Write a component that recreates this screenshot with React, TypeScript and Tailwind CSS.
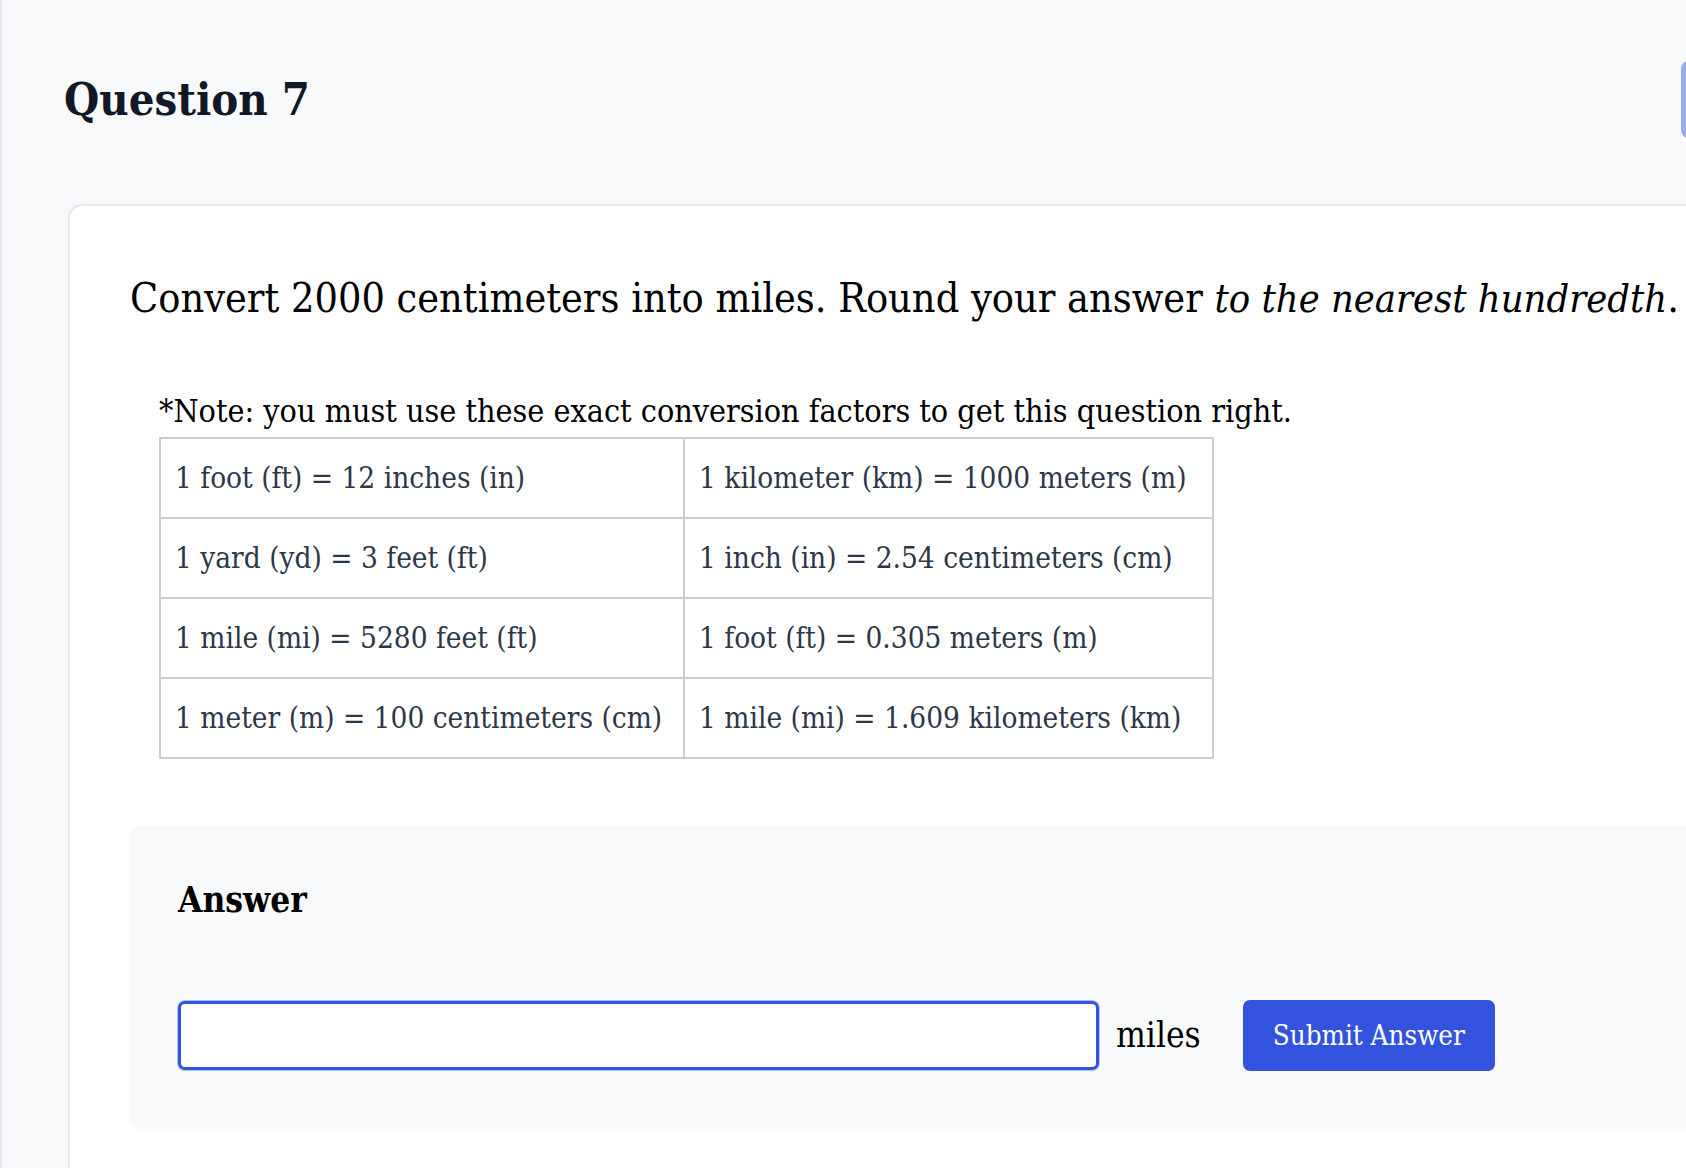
import React from "react";

const rows: [string, string][] = [
  ["1 foot (ft) = 12 inches (in)", "1 kilometer (km) = 1000 meters (m)"],
  ["1 yard (yd) = 3 feet (ft)", "1 inch (in) = 2.54 centimeters (cm)"],
  ["1 mile (mi) = 5280 feet (ft)", "1 foot (ft) = 0.305 meters (m)"],
  ["1 meter (m) = 100 centimeters (cm)", "1 mile (mi) = 1.609 kilometers (km)"],
];

export default function App() {
  return (
    <div
      className="h-[1168px] w-full overflow-hidden bg-[#f8f9fb] border-l-2 border-[#e6e8ec]"
      style={{ fontFamily: '"DejaVu Serif Condensed", "DejaVu Serif", "Liberation Serif", serif', fontStretch: "condensed" }}
    >
      <div className="w-[2000px] pl-[64px]">
        <div className="flex items-center pt-[61px]">
          <h1 className="-ml-[2px] w-[1617px] shrink-0 text-[45px] leading-[77px] font-bold text-[#111827]">
            Question 7
          </h1>
          <div className="h-[77px] w-[160px] shrink-0 rounded-l-lg bg-[#9ca8ef]" />
        </div>

        <div className="mt-[66px] ml-[2px] rounded-tl-[14px] border-l-2 border-t-2 border-[#e6e8ec] bg-white pl-[60px] pt-[68px] pb-[200px]">
          <p className="whitespace-nowrap text-[41px] leading-[49px] text-black">
            Convert 2000 centimeters into miles. Round your answer{" "}
            <em className="text-[39.5px]">to the nearest hundredth</em>.
          </p>

          <div className="ml-[29px] mt-[70px]">
            <p className="text-[32px] leading-[36px] text-black">
              *Note: you must use these exact conversion factors to get this question right.
            </p>
            <table className="mt-[8px] border-collapse border-2 border-[#cdcdcd] text-[29.5px] text-[#2d3748]">
              <tbody>
                {rows.map((r, i) => (
                  <tr key={i} className="h-[80px]">
                    <td className="w-[524px] border-2 border-[#cdcdcd] px-[14px] whitespace-nowrap">
                      {r[0]}
                    </td>
                    <td className="w-[529px] border-2 border-[#cdcdcd] px-[14px] whitespace-nowrap">
                      {r[1]}
                    </td>
                  </tr>
                ))}
              </tbody>
            </table>
          </div>

          <div className="mt-[66px] rounded-l-[10px] bg-[#f8f9fb] pl-[48px] pt-[56px] pb-[58px]">
            <div className="text-[35px] leading-[38px] font-bold text-black">Answer</div>
            <div className="mt-[81px] flex items-center">
              <input
                type="text"
                className="h-[69px] w-[921px] rounded-[7px] border-[3px] border-[#3355dd] bg-white shadow-[0_0_0_1px_rgba(51,85,221,0.35)] outline-none"
              />
              <span className="ml-[17px] text-[35px] text-black">miles</span>
              <button className="ml-[42px] h-[71px] w-[252px] rounded-[7px] bg-[#3353df] text-[27.5px] text-white">
                Submit Answer
              </button>
            </div>
          </div>
        </div>
      </div>
    </div>
  );
}
